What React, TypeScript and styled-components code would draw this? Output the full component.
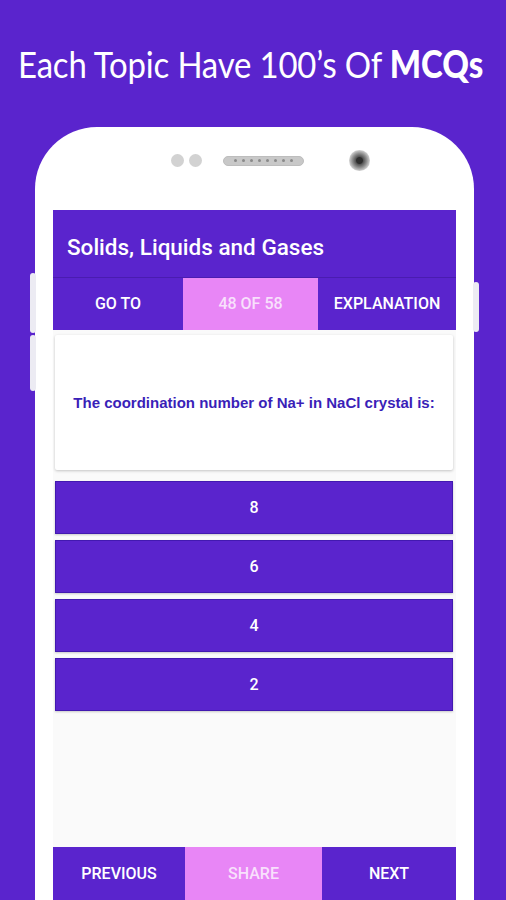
import styled, { createGlobalStyle } from 'styled-components'

const GlobalStyle = createGlobalStyle`
  html, body {
    margin: 0;
    padding: 0;
    background: #5a24cd;
  }
  * {
    box-sizing: border-box;
  }
`

const Page = styled.div`
  width: 506px;
  height: 900px;
  overflow: hidden;
  background: #5a24cd;
  display: flex;
  flex-direction: column;
`

const Headline = styled.h1`
  margin: 0;
  height: 127px;
  padding: 44px 0 0 18px;
  color: #fff;
  font-family: 'Lato', 'Liberation Sans', sans-serif;
  font-weight: 400;
  font-size: 37px;
  line-height: 40px;
  white-space: nowrap;

  span {
    display: inline-block;
    transform: scaleX(0.89);
    transform-origin: left center;
    letter-spacing: -0.2px;
  }

  b {
    font-weight: 900;
    letter-spacing: 0;
  }
`

const Phone = styled.div`
  position: relative;
  margin-left: 35px;
  width: 439px;
  flex: 1;
  background: #fff;
  border-radius: 62px 62px 0 0;
  display: flex;
  flex-direction: column;
`

const SideKey = styled.div<{ side: 'left' | 'right'; top: number; height: number }>`
  position: absolute;
  top: ${p => p.top}px;
  height: ${p => p.height}px;
  width: 6px;
  ${p => (p.side === 'left' ? 'left: -5px;' : 'right: -5px;')}
  background: #ecebf3;
  border-radius: 3px;
`

const TopBezel = styled.div`
  height: 83px;
  display: flex;
  align-items: center;
  padding: 0 0 16px 136px;
`

const Dot = styled.span`
  width: 13px;
  height: 13px;
  border-radius: 50%;
  background: #d2d2d2;
  margin-right: 5px;
`

const Speaker = styled.span`
  margin-left: 16px;
  width: 81px;
  height: 10px;
  border-radius: 5px;
  background: #c8c8c8;
  border: 1px solid #bdbdbd;
  display: flex;
  align-items: center;
  justify-content: center;
  gap: 5px;

  i {
    width: 3px;
    height: 3px;
    border-radius: 50%;
    background: #8a8a8a;
  }
`

const Camera = styled.span`
  margin-left: 45px;
  width: 21px;
  height: 21px;
  border-radius: 50%;
  background: radial-gradient(circle, #2e2e2e 0 3px, #555 4px, #8c8c8c 7px, #c9c9c9 10px);
`

const Screen = styled.div`
  margin-left: 18px;
  width: 403px;
  flex: 1;
  display: flex;
  flex-direction: column;
  background: #fafafa;
`

const TitleBar = styled.div`
  height: 67px;
  background: #5a24cd;
  color: #fff;
  display: flex;
  align-items: center;
  padding: 6px 0 0 14px;
  font-family: 'Roboto', 'Liberation Sans', sans-serif;
  font-weight: 500;
  font-size: 22.5px;
  box-shadow: 0 1px 0 #4a1cb0;
  position: relative;
  z-index: 1;
`

const ButtonRow = styled.div<{ cols: string }>`
  height: 53px;
  display: grid;
  grid-template-columns: ${p => p.cols};
`

const BarButton = styled.div<{ active?: boolean }>`
  display: flex;
  align-items: center;
  justify-content: center;
  background: ${p => (p.active ? '#e886f6' : '#5a24cd')};
  color: ${p => (p.active ? '#f8e0fc' : '#ffffff')};
  font-family: 'Roboto', 'Liberation Sans', sans-serif;
  font-weight: 500;
  font-size: 16px;
  text-transform: uppercase;
`

const Content = styled.div`
  flex: 1;
  padding: 5px 3px 0 2px;
  display: flex;
  flex-direction: column;
`

const QuestionCard = styled.div`
  height: 135px;
  background: #fff;
  border-radius: 2px;
  box-shadow: 0 1px 3px rgba(0, 0, 0, 0.22);
  display: flex;
  align-items: center;
  justify-content: center;
  color: #3a1fb8;
  font-family: 'Liberation Sans', Arial, sans-serif;
  font-weight: 700;
  font-size: 15px;
  margin-bottom: 11px;
`

const Options = styled.div`
  display: flex;
  flex-direction: column;
  gap: 6px;
`

const Option = styled.div`
  height: 53px;
  background: #5a24cd;
  border: 1px solid #4219b0;
  box-shadow: 0 1px 2px rgba(0, 0, 0, 0.2);
  color: #fff;
  display: flex;
  align-items: center;
  justify-content: center;
  font-family: 'Roboto', 'Liberation Sans', sans-serif;
  font-weight: 500;
  font-size: 16px;
`

const tabs = [
  { label: 'Go to' },
  { label: '48 of 58', active: true },
  { label: 'Explanation' },
]

const footer = [
  { label: 'Previous' },
  { label: 'Share', active: true },
  { label: 'Next' },
]

const answers = ['8', '6', '4', '2']

export default function App() {
  return (
    <>
      <GlobalStyle />
      <Page>
        <Headline>
          <span>
            Each Topic Have 100’s Of <b>MCQs</b>
          </span>
        </Headline>
        <Phone>
          <SideKey side="left" top={146} height={60} />
          <SideKey side="left" top={208} height={56} />
          <SideKey side="right" top={155} height={50} />
          <TopBezel>
            <Dot />
            <Dot />
            <Speaker>
              {Array.from({ length: 8 }).map((_, i) => (
                <i key={i} />
              ))}
            </Speaker>
            <Camera />
          </TopBezel>
          <Screen>
            <TitleBar>Solids, Liquids and Gases</TitleBar>
            <ButtonRow cols="130px 135px 138px">
              {tabs.map(t => (
                <BarButton key={t.label} active={t.active}>
                  {t.label}
                </BarButton>
              ))}
            </ButtonRow>
            <Content>
              <QuestionCard>The coordination number of Na+ in NaCl crystal is:</QuestionCard>
              <Options>
                {answers.map(a => (
                  <Option key={a}>{a}</Option>
                ))}
              </Options>
            </Content>
            <ButtonRow cols="132px 137px 134px">
              {footer.map(f => (
                <BarButton key={f.label} active={f.active}>
                  {f.label}
                </BarButton>
              ))}
            </ButtonRow>
          </Screen>
        </Phone>
      </Page>
    </>
  )
}
